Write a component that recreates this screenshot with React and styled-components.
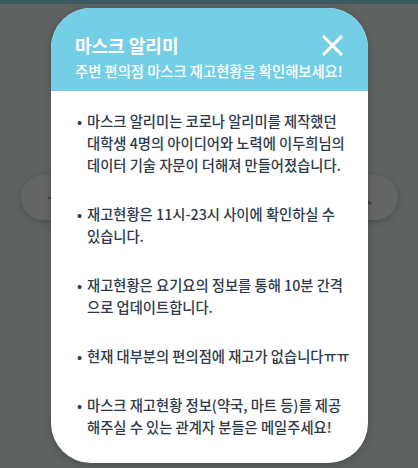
import React from 'react';
import styled, { createGlobalStyle } from 'styled-components';

const GlobalStyle = createGlobalStyle`
    html, body {
        margin: 0;
        padding: 0;
        background: #5f6262;
        font-family: "Noto Sans CJK KR", "Noto Sans", sans-serif;
    }
`

const Page = styled.div`
    position: relative;
    width: 418px;
    height: 468px;
    overflow: hidden;
    background: #5f6262;
`

const TopBar = styled.div`
    height: 4px;
    background: #3b5a61;
`

const SearchArea = styled.div`
    padding: 171px 20px 0 21px;
`

const SearchPill = styled.div`
    height: 45px;
    border-radius: 23px;
    background: #646666;
    box-shadow: 0 2px 6px rgba(0, 0, 0, 0.18);
    display: flex;
    align-items: center;
    justify-content: space-between;
    padding: 0 26px 0 27px;
`

const Mark = styled.span`
    width: 4px;
    height: 2px;
    background: #3c3f40;
`

const Chevron = styled.span`
    width: 7px;
    height: 2px;
    background: #3c3f40;
    transform: rotate(40deg);
    margin-top: 8px;
`

const Modal = styled.div`
    position: absolute;
    left: 51px;
    top: 8px;
    width: 317px;
    height: 455px;
    border-radius: 40px;
    background: #ffffff;
    overflow: hidden;
    box-shadow: 0 2px 8px rgba(0, 0, 0, 0.2);
`

const Header = styled.div`
    background: #74cfe6;
    height: 83px;
    box-sizing: border-box;
    padding: 24px 24px 0 24px;
    color: #ffffff;
`

const TitleRow = styled.div`
    display: flex;
    justify-content: space-between;
    align-items: center;
`

const Title = styled.h1`
    margin: 0;
    font-size: 18px;
    font-weight: 700;
    line-height: 26px;
`

const CloseButton = styled.button`
    border: none;
    background: none;
    padding: 0;
    width: 24px;
    height: 24px;
    display: flex;
    align-items: center;
    justify-content: center;
`

const Subtitle = styled.p`
    margin: 3px 0 0 0;
    font-size: 14.3px;
    font-weight: 500;
    line-height: 20px;
    white-space: nowrap;
`

const Notices = styled.ul`
    list-style: none;
    margin: 0;
    padding: 19px 10px 0 26px;
    display: flex;
    flex-direction: column;
    gap: 27px;
`

const Notice = styled.li`
    display: flex;
    font-size: 14.3px;
    font-weight: 500;
    line-height: 22px;
    color: #2e3a4b;
`

const Bullet = styled.span`
    width: 10px;
    flex-shrink: 0;
`

const NoticeText = styled.div`
    display: flex;
    flex-direction: column;
`

const Line = styled.span`
    white-space: nowrap;
`

const notices = [
    ['마스크 알리미는 코로나 알리미를 제작했던', '대학생 4명의 아이디어와 노력에 이두희님의', '데이터 기술 자문이 더해져 만들어졌습니다.'],
    ['재고현황은 11시-23시 사이에 확인하실 수', '있습니다.'],
    ['재고현황은 요기요의 정보를 통해 10분 간격', '으로 업데이트합니다.'],
    ['현재 대부분의 편의점에 재고가 없습니다ㅠㅠ'],
    ['마스크 재고현황 정보(약국, 마트 등)를 제공', '해주실 수 있는 관계자 분들은 메일주세요!'],
]

const App = () => {
    return (
        <Page>
            <GlobalStyle />
            <TopBar />
            <SearchArea>
                <SearchPill>
                    <Mark />
                    <Chevron />
                </SearchPill>
            </SearchArea>
            <Modal>
                <Header>
                    <TitleRow>
                        <Title>마스크 알리미</Title>
                        <CloseButton aria-label="닫기">
                            <svg width="21" height="21" viewBox="0 0 21 21">
                                <path d="M2 2 L19 19 M19 2 L2 19" stroke="#ffffff" strokeWidth="3" strokeLinecap="square" />
                            </svg>
                        </CloseButton>
                    </TitleRow>
                    <Subtitle>주변 편의점 마스크 재고현황을 확인해보세요!</Subtitle>
                </Header>
                <Notices>
                    {notices.map((lines) => (
                        <Notice key={lines[0]}>
                            <Bullet>•</Bullet>
                            <NoticeText>
                                {lines.map((line) => (
                                    <Line key={line}>{line}</Line>
                                ))}
                            </NoticeText>
                        </Notice>
                    ))}
                </Notices>
            </Modal>
        </Page>
    );
}

export default App;
